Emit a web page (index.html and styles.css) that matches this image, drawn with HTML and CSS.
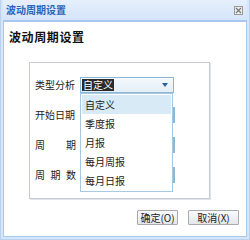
FILE: index.html
```html
<!DOCTYPE html>
<html>
<head>
<meta charset="utf-8">
<link rel="stylesheet" href="styles.css">
</head>
<body>
<div class="window">
  <div class="titlebar">
    <span class="title">波动周期设置</span>
    <span class="close">
      <svg width="9" height="9" viewBox="0 0 9 9"><rect x="0.5" y="0.5" width="8" height="8" fill="#eee" stroke="#999"/><path d="M2 2L7 7M7 2L2 7" stroke="#777" stroke-width="1.2"/></svg>
    </span>
  </div>
  <div class="content">
    <div class="heading">波动周期设置</div>
    <div class="group">
      <div class="row">
        <span class="label">类型分析</span>
        <div class="select">
          <span class="sel-text">自定义</span>
          <span class="arrow"></span>
        </div>
      </div>
      <div class="row">
        <span class="label">开始日期</span>
        <div class="input"></div>
      </div>
      <div class="row">
        <span class="label spread"><span>周</span><span>期</span></span>
        <div class="input"></div>
      </div>
      <div class="row">
        <span class="label spread"><span>周</span><span>期</span><span>数</span></span>
        <div class="input"></div>
      </div>
      <ul class="dropdown">
        <li class="active">自定义</li>
        <li>季度报</li>
        <li>月报</li>
        <li>每月周报</li>
        <li>每月日报</li>
      </ul>
    </div>
    <div class="buttons">
      <button class="btn ok">确定(O)</button>
      <button class="btn cancel">取消(X)</button>
    </div>
  </div>
</div>
</body>
</html>
```
FILE: styles.css
```css
* { box-sizing: border-box; }
html, body { margin: 0; padding: 0; }
body {
  font-family: "Noto Sans CJK SC", "Liberation Sans", sans-serif;
  font-size: 10px;
  color: #222;
  background: #fff;
}
.window {
  width: 250px;
  height: 240px;
  background: #d6e6fa;
  padding: 0 2px 2px 2px;
  display: flex;
  flex-direction: column;
  border-left: 1px solid #b8d2f0;
  border-right: 1px solid #b8d2f0;
  border-bottom: 1px solid #b8d2f0;
}
.titlebar {
  height: 20px;
  flex: none;
  display: flex;
  align-items: center;
  justify-content: space-between;
  padding: 0 4px 0 3px;
  background: linear-gradient(#e6effc, #d4e4f9);
}
.title {
  color: #2b63b8;
  font-weight: bold;
  font-size: 10px;
  line-height: 20px;
}
.close { display: flex; }
.content {
  flex: 1;
  background: #fff;
  border: 1px solid #a9c8ee;
  border-top: 2px solid #a9c8ee;
  display: flex;
  flex-direction: column;
  padding: 0 0 0 25px;
}
.heading {
  font-size: 12px;
  letter-spacing: 0.6px;
  font-weight: bold;
  color: #111;
  margin: 6px 0 0 -20px;
  line-height: 18px;
}
.group {
  position: relative;
  margin-top: 16px;
  width: 181px;
  height: 137px;
  border: 1px solid #c7c9d6;
  box-shadow: 1px 1px 0 #e3e4ea;
  padding: 14px 0 0 5px;
  display: flex;
  flex-direction: column;
  gap: 15px;
}
.row {
  display: flex;
  align-items: center;
  height: 15px;
}
.label {
  width: 45px;
  flex: none;
  white-space: nowrap;
  font-size: 10px;
  color: #222;
  line-height: 15px;
  display: flex;
}
.spread { justify-content: space-between; width: 41px; margin-right: 4px; }
.select {
  width: 94px;
  height: 16px;
  border: 1px solid #8fb7d4;
  background: linear-gradient(#f4f9fd, #e3eef8);
  display: flex;
  align-items: center;
  justify-content: space-between;
  padding: 0 5px 0 1px;
}
.sel-text {
  background: #2b2b2b;
  color: #fff;
  line-height: 12px;
  padding: 0 1px;
}
.arrow {
  width: 0; height: 0;
  border-left: 3px solid transparent;
  border-right: 3px solid transparent;
  border-top: 4px solid #2d5f9a;
}
.input {
  width: 95px;
  height: 16px;
  border: 1px solid #8fb7d4;
  border-right: 2px solid #8fb7d4;
  background: #fff;
}
.dropdown {
  position: absolute;
  left: 50px;
  top: 30px;
  width: 93px;
  margin: 0;
  padding: 1px;
  list-style: none;
  background: #fff;
  border: 1px solid #a8c9e2;
}
.dropdown li {
  height: 19px;
  line-height: 19px;
  padding-left: 3px;
  font-size: 10px;
  color: #222;
}
.dropdown li.active { background: #d7eaf6; }
.buttons {
  display: flex;
  justify-content: flex-end;
  gap: 10px;
  margin-top: 11px;
  padding-right: 7px;
}
.btn {
  font-family: "Noto Sans CJK SC", "Liberation Sans", sans-serif;
  font-size: 10px;
  height: 15px;
  line-height: 13px;
  padding: 0;
  border: 1px solid #a9a9b0;
  background: linear-gradient(#fbfbfc, #e4e6ea);
  color: #222;
  border-radius: 1px;
}
.ok { width: 41px; }
.cancel { width: 51px; }
```
